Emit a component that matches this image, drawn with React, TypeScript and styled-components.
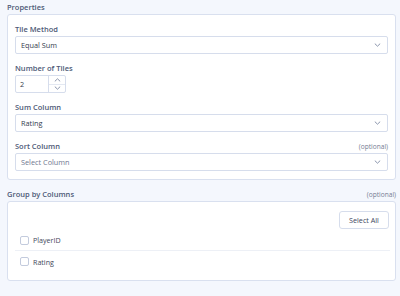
import React from "react";
import styled, { createGlobalStyle } from "styled-components";

const Global = createGlobalStyle`
  html, body { margin: 0; padding: 0; background: #f4f7fd; }
  body { font-family: "Open Sans", "Noto Sans", sans-serif; font-size: 7.5px; color: #3a4358; }
  * { box-sizing: border-box; }
`;

const Page = styled.div`
  padding: 0 4px 0 7px;
  display: flex;
  flex-direction: column;
`;

const SectionHeader = styled.div<{ $gap?: number }>`
  height: 14px;
  margin-top: ${(p) => p.$gap ?? 0}px;
  display: flex;
  align-items: center;
  justify-content: space-between;
`;

const SectionTitle = styled.span`
  font-size: 7.5px;
  font-weight: 600;
  color: #4d5976;
`;

const Optional = styled.span`
  font-size: 6.6px;
  color: #747d92;
`;

const Panel = styled.div`
  background: #ffffff;
  border: 1px solid #d9e0ef;
  border-radius: 3px;
  padding: 8px 7px;
  display: flex;
  flex-direction: column;
  gap: 8px;
`;

const Field = styled.div`
  display: flex;
  flex-direction: column;
`;

const LabelRow = styled.div`
  height: 12px;
  margin-bottom: 1px;
  display: flex;
  align-items: center;
  justify-content: space-between;
`;

const Label = styled.span`
  font-size: 7.5px;
  font-weight: 600;
  color: #4d5976;
`;

const Select = styled.div`
  height: 18px;
  border: 1px solid #d6ddec;
  border-radius: 2px;
  background: #fff;
  display: flex;
  align-items: center;
  justify-content: space-between;
  padding: 0 6px 0 5px;
`;

const Value = styled.span<{ $placeholder?: boolean }>`
  font-size: 7.3px;
  color: ${(p) => (p.$placeholder ? "#6f7890" : "#333b4e")};
`;

const NumberBox = styled.div`
  width: 51px;
  height: 18px;
  border: 1px solid #d6ddec;
  border-radius: 2px;
  display: flex;
`;

const NumberValue = styled.div`
  flex: 1;
  display: flex;
  align-items: center;
  padding-left: 4px;
  font-size: 7.3px;
  color: #333b4e;
`;

const Stepper = styled.div`
  width: 17px;
  border-left: 1px solid #d6ddec;
  display: flex;
  flex-direction: column;
`;

const StepBtn = styled.div<{ $top?: boolean }>`
  flex: 1;
  display: flex;
  align-items: center;
  justify-content: center;
  border-bottom: ${(p) => (p.$top ? "1px solid #e3e8f2" : "none")};
`;

const ButtonRow = styled.div`
  display: flex;
  justify-content: flex-end;
  margin-top: 1px;
`;

const Button = styled.button`
  width: 50px;
  height: 18px;
  border: 1px solid #d6ddec;
  border-radius: 3px;
  background: #fff;
  font-family: inherit;
  font-size: 7.2px;
  color: #3c4660;
  padding: 0;
  margin-right: -1px;
`;

const List = styled.div`
  display: flex;
  flex-direction: column;
  margin-top: -7px;
`;

const Row = styled.div<{ $divider?: boolean }>`
  height: 21px;
  display: flex;
  align-items: center;
  gap: 4px;
  padding-left: 5px;
  border-bottom: ${(p) => (p.$divider ? "1px solid #edf0f6" : "none")};
  margin-right: -2px;
`;

const Checkbox = styled.span`
  width: 9px;
  height: 9px;
  border: 1px solid #c3cbdd;
  border-radius: 2px;
  background: #fff;
`;

const RowText = styled.span`
  font-size: 7.1px;
  color: #3f475a;
`;

const Chevron = ({ up }: { up?: boolean }) => (
  <svg width="7" height="4" viewBox="0 0 7 4">
    <path
      d={up ? "M0.8 3.4 L3.5 0.8 L6.2 3.4" : "M0.8 0.6 L3.5 3.2 L6.2 0.6"}
      fill="none"
      stroke="#7d88a3"
      strokeWidth="0.9"
    />
  </svg>
);

const SelectField = ({
  label,
  value,
  placeholder,
  optional,
}: {
  label: string;
  value: string;
  placeholder?: boolean;
  optional?: boolean;
}) => (
  <Field>
    <LabelRow>
      <Label>{label}</Label>
      {optional && <Optional>(optional)</Optional>}
    </LabelRow>
    <Select>
      <Value $placeholder={placeholder}>{value}</Value>
      <Chevron />
    </Select>
  </Field>
);

export default function App() {
  return (
    <Page>
      <Global />
      <SectionHeader>
        <SectionTitle>Properties</SectionTitle>
      </SectionHeader>
      <Panel>
        <SelectField label="Tile Method" value="Equal Sum" />
        <Field>
          <LabelRow>
            <Label>Number of Tiles</Label>
          </LabelRow>
          <NumberBox>
            <NumberValue>2</NumberValue>
            <Stepper>
              <StepBtn $top>
                <Chevron up />
              </StepBtn>
              <StepBtn>
                <Chevron />
              </StepBtn>
            </Stepper>
          </NumberBox>
        </Field>
        <SelectField label="Sum Column" value="Rating" />
        <SelectField label="Sort Column" value="Select Column" placeholder optional />
      </Panel>
      <SectionHeader $gap={7}>
        <SectionTitle>Group by Columns</SectionTitle>
        <Optional>(optional)</Optional>
      </SectionHeader>
      <Panel>
        <ButtonRow>
          <Button>Select All</Button>
        </ButtonRow>
        <List>
          <Row $divider>
            <Checkbox />
            <RowText>PlayerID</RowText>
          </Row>
          <Row>
            <Checkbox />
            <RowText>Rating</RowText>
          </Row>
        </List>
      </Panel>
    </Page>
  );
}
